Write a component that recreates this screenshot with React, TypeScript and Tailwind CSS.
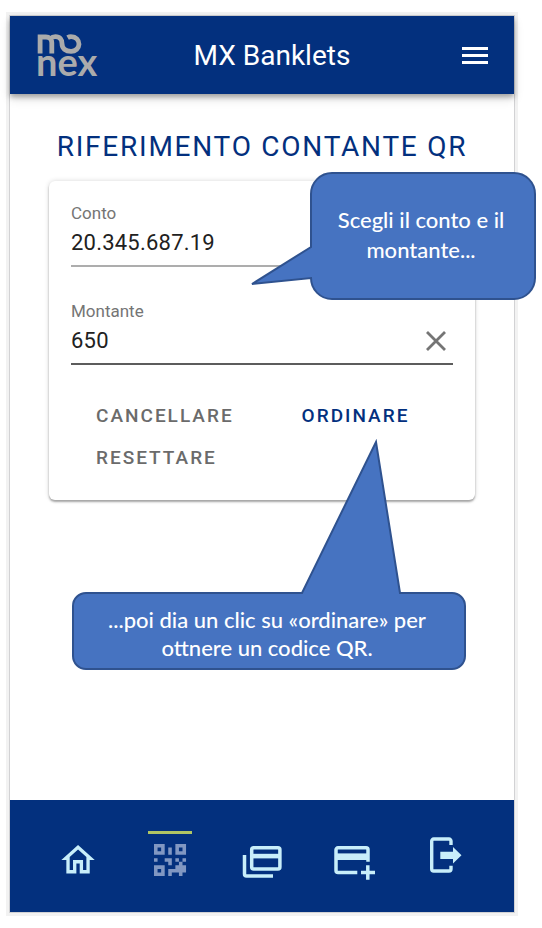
import type { ReactNode } from "react";

const roboto = "font-['Roboto','Noto_Sans',sans-serif]";
const lato = "font-['Lato','Open_Sans',sans-serif]";

function Logo() {
  return (
    <svg
      className="h-11 w-[60px] shrink-0 overflow-visible text-[#ababab]"
      viewBox="0 0 60 44"
      role="img"
      aria-label="monex"
    >
      <g fill="none" stroke="currentColor" strokeWidth="4.8">
        <path d="M2.1 20.5V4H8a5.8 5.8 0 0 1 5.8 5.8V20.5" />
        <path d="M12.4 5.6Q14.4 3.6 17.4 3.6C22 3.6 24 6.6 24 10.6C24 15.6 27.6 18.4 33 18.4A7.8 7.4 0 0 0 33.4 3.6Q31.4 3.5 29.6 4.6" />
      </g>
      <text
        x="-2"
        y="43"
        fill="currentColor"
        className="font-['Lato',sans-serif] text-[38px] font-bold"
      >
        nex
      </text>
    </svg>
  );
}

function Header() {
  return (
    <header className="z-10 flex h-[78px] items-center bg-[#03307e] pr-[10px] pl-7 text-white shadow-[0_3px_5px_rgba(0,0,0,0.3),0_5px_10px_rgba(0,0,0,0.12)]">
      <Logo />
      <h1 className="flex-1 pt-[2px] text-center text-[28px] leading-9">MX Banklets</h1>
      <button type="button" aria-label="Menu" className="px-4 py-3">
        <svg className="h-[18px] w-[26px]" viewBox="0 0 26 18" fill="currentColor">
          <path d="M0 1h26v3H0zM0 8h26v3H0zM0 15h26v3H0z" />
        </svg>
      </button>
    </header>
  );
}

function Field({
  id,
  label,
  value,
  active,
  children,
}: {
  id: string;
  label: string;
  value: string;
  active?: boolean;
  children?: ReactNode;
}) {
  return (
    <div>
      <label htmlFor={id} className="block text-[17px] leading-5 text-[#757575]">
        {label}
      </label>
      <div
        className={
          active
            ? "flex h-11 items-center border-b-2 border-[#5c5c5c] pb-[3px]"
            : "flex h-11 items-center border-b-2 border-[#adadad] pb-[3px]"
        }
      >
        <input
          id={id}
          defaultValue={value}
          className="min-w-0 flex-1 text-[22px] leading-7 tracking-[0.01em] text-[#212121] outline-none"
        />
        {children}
      </div>
    </div>
  );
}

function FirstCallout() {
  return (
    <div className="absolute -top-[9px] -right-[61px] h-32 w-[286px]">
      <svg className="absolute inset-0 h-full w-full" viewBox="0 0 286 128">
        <path
          d="M82 1H264A21 21 0 0 1 285 22V106A21 21 0 0 1 264 127H82A21 21 0 0 1 61 106L2 112L61 75V22A21 21 0 0 1 82 1Z"
          fill="#4673c1"
          stroke="#2f528f"
          strokeWidth="2"
        />
      </svg>
      <p
        className={`${lato} relative mr-1 ml-[60px] flex h-full items-center justify-center pb-[2px] text-center text-[22px] leading-[30px] font-medium text-white`}
      >
        Scegli il conto e il
        <br />
        montante...
      </p>
    </div>
  );
}

function SecondCallout() {
  return (
    <div className="absolute top-[258px] left-[23px] h-[231px] w-[394px]">
      <svg className="absolute inset-0 h-full w-full" viewBox="0 0 394 231">
        <path
          d="M14 154H230L304 3L328 154H380A13 13 0 0 1 393 167V217A13 13 0 0 1 380 230H14A13 13 0 0 1 1 217V167A13 13 0 0 1 14 154Z"
          fill="#4673c1"
          stroke="#2f528f"
          strokeWidth="2"
        />
      </svg>
      <p
        className={`${lato} relative mr-1 flex h-full items-end justify-center pb-2 text-center text-[22px] leading-7 font-medium text-white`}
      >
        ...poi dia un clic su «ordinare» per
        <br />
        ottnere un codice QR.
      </p>
    </div>
  );
}

function OrderCard() {
  return (
    <form
      className="relative mx-[39px] mt-[17px] rounded-md bg-white px-[22px] pt-[22px] pb-[21px] shadow-[0_2px_2px_rgba(0,0,0,0.3),0_0_5px_rgba(0,0,0,0.16)]"
      onSubmit={(event) => event.preventDefault()}
    >
      <div className="flex flex-col gap-[34px]">
        <Field id="conto" label="Conto" value="20.345.687.19" />
        <Field id="montante" label="Montante" value="650" active>
          <button type="button" aria-label="Cancella montante" className="px-[7px]">
            <svg className="h-5 w-5" viewBox="0 0 20 20" stroke="#757575" strokeWidth="2.8">
              <path d="M1 1L19 19M19 1L1 19" />
            </svg>
          </button>
        </Field>
      </div>
      <div className="mt-[30px] flex flex-wrap gap-x-[18px] text-[19px] font-medium tracking-[2px]">
        <button type="button" className="h-[42px] px-[25px] text-[#6b6b6b]">
          CANCELLARE
        </button>
        <button type="submit" className="h-[42px] px-[25px] text-[#03307e]">
          ORDINARE
        </button>
        <button type="reset" className="h-[42px] px-[25px] text-[#6b6b6b]">
          RESETTARE
        </button>
      </div>
      <FirstCallout />
      <SecondCallout />
    </form>
  );
}

function NavItem({
  label,
  active,
  children,
}: {
  label: string;
  active?: boolean;
  children: ReactNode;
}) {
  return (
    <a
      href="#"
      aria-label={label}
      aria-current={active ? "page" : undefined}
      className={
        active
          ? "flex flex-1 flex-col items-center gap-1 text-[#8197c2]"
          : "flex flex-1 flex-col items-center gap-1 text-[#c8eefa]"
      }
    >
      <span className={active ? "h-[3px] w-11 bg-[#b0c564]" : "h-[3px] w-11"} />
      <svg className="h-11 w-11 overflow-visible" viewBox="0 0 44 44">
        {children}
      </svg>
    </a>
  );
}

function BottomNav() {
  return (
    <nav className="flex bg-[#03307e] px-[22px] pt-[31px] pb-[30px]">
      <NavItem label="Home">
        <path
          transform="translate(2 2) scale(1.67)"
          fill="currentColor"
          d="M12 5.69l5 4.5V18h-2v-6H9v6H7v-7.81l5-4.5M12 3L2 12h3v8h6v-6h2v6h6v-8h3L12 3z"
        />
      </NavItem>
      <NavItem label="Codice QR" active>
        <path
          transform="translate(0.67 0.67) scale(1.78)"
          fill="currentColor"
          fillRule="evenodd"
          d="M3 11H5V13H3V11M11 5H13V9H11V5M9 11H13V15H11V13H9V11M15 11H17V13H19V11H21V13H19V15H21V19H19V21H17V19H13V21H11V17H15V15H17V13H15V11M15 3H21V9H15V3M17 5V7H19V5H17M3 3H9V9H3V3M5 5V7H7V5H5M3 15H9V21H3V15M5 17V19H7V17H5Z"
        />
      </NavItem>
      <NavItem label="Carte">
        <g fill="none" stroke="currentColor" strokeWidth="3.5">
          <rect x="11.7" y="9.7" width="28.2" height="21.3" rx="2" />
          <path d="M4.5 17V36a2 2 0 0 0 2 2H33" />
          <path d="M11.7 18.1H39.9" strokeWidth="4.6" />
        </g>
      </NavItem>
      <NavItem label="Aggiungi carta">
        <g fill="none" stroke="currentColor" strokeWidth="3.5">
          <path d="M25.3 34.5H6a2 2 0 0 1-2-2V11.8a2 2 0 0 1 2-2H34a2 2 0 0 1 2 2V23.7" />
          <path d="M4 18.7H36" strokeWidth="6.6" />
          <path d="M29 34.5H43M35.8 27.3V41.7" />
        </g>
      </NavItem>
      <NavItem label="Esci">
        <path
          fill="none"
          stroke="currentColor"
          strokeWidth="3.4"
          d="M27 7V3a2 2 0 0 0-2-2H9.7a2 2 0 0 0-2 2V31a2 2 0 0 0 2 2H25a2 2 0 0 0 2-2V27.7"
        />
        <path fill="currentColor" d="M16.3 13.7H29V9L37.5 17.3L29 25.5V21H16.3Z" />
      </NavItem>
    </nav>
  );
}

export default function App() {
  return (
    <div className={`${roboto} flex min-h-screen flex-col bg-white pt-3 pr-6 pb-3 pl-[6px]`}>
      <div className="flex flex-1 flex-col border-[3px] border-[#f2f2f2]">
        <div className="flex flex-1 flex-col border border-[#d2d2d4] bg-white">
          <Header />
          <main className="flex-1 pb-[200px]">
            <h2 className="pt-9 text-center text-[28px] leading-[34px] tracking-[0.0625em] whitespace-nowrap text-[#03307e]">
              RIFERIMENTO CONTANTE QR
            </h2>
            <OrderCard />
          </main>
          <BottomNav />
        </div>
      </div>
    </div>
  );
}
